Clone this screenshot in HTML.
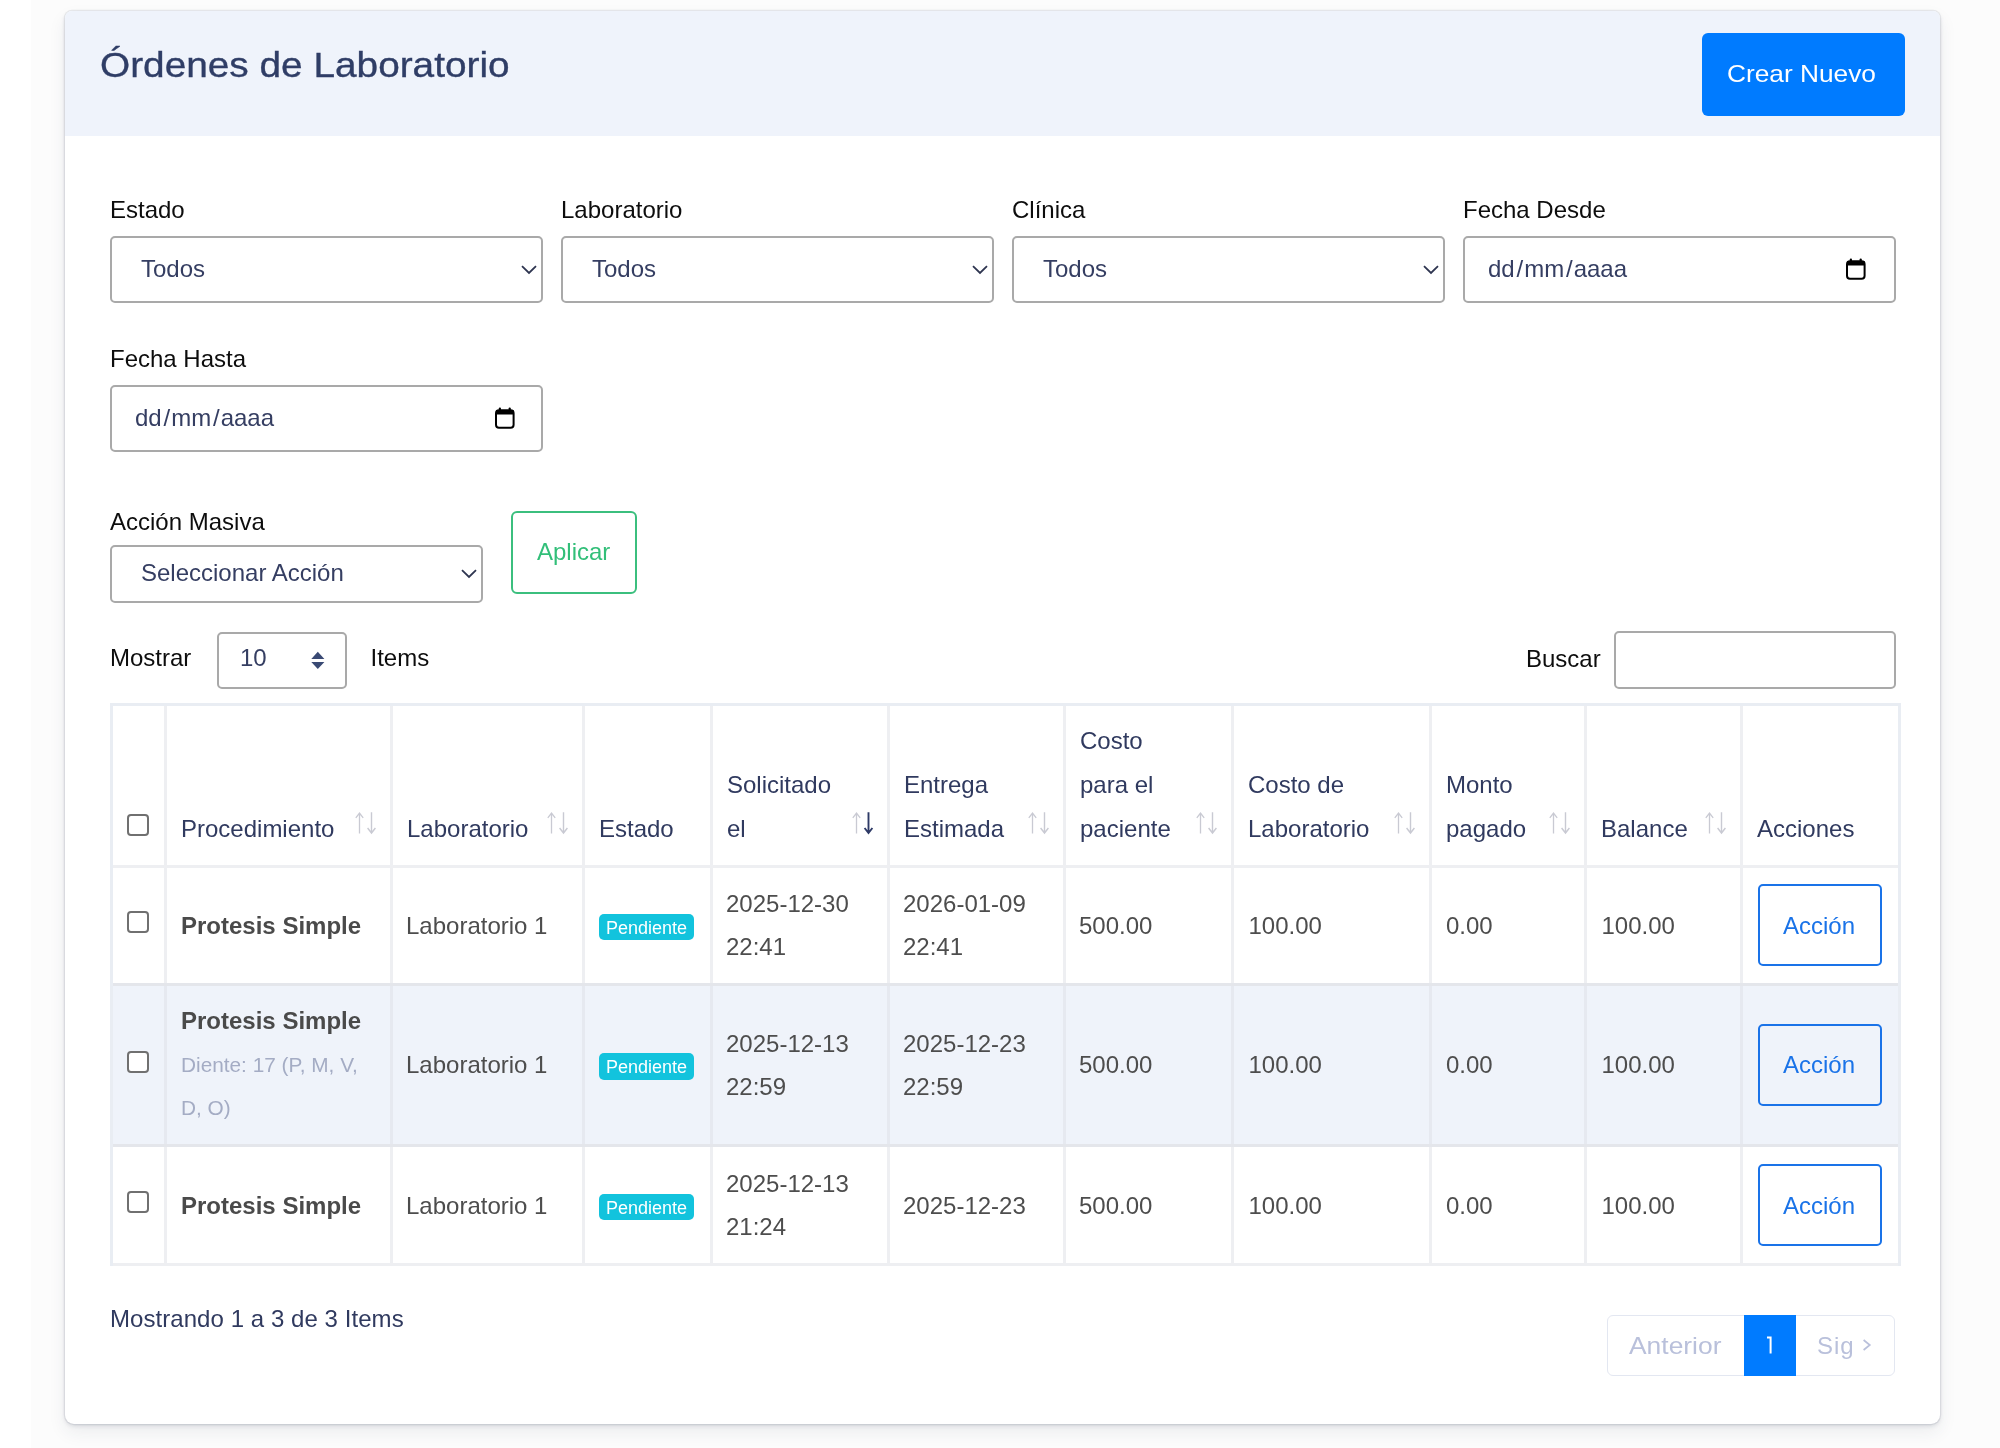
<!DOCTYPE html>
<html><head><meta charset="utf-8"><title>Ordenes de Laboratorio</title>
<style>
html,body{margin:0;padding:0;}
body{width:2000px;height:1448px;position:relative;overflow:hidden;background:#fff;font-family:"Liberation Sans", sans-serif;}
.t{position:absolute;white-space:nowrap;line-height:1;font-family:"Liberation Sans", sans-serif;}
.r{position:absolute;}
#wrap{position:absolute;left:0;top:0;width:2000px;height:1448px;will-change:transform;}
.sl{margin:0 1px 0 1.8px;}
svg.r{overflow:visible;}
</style></head><body>
<div id=wrap>
<div class="r" style="left:31px;top:0px;width:1969px;height:1448px;background:#fcfcfc;"></div>
<div class="r" style="left:65px;top:11px;width:1875px;height:1413px;background:#fff;border-radius:7px 7px 9px 9px;box-shadow:0 0 0 1.2px rgba(40,50,80,0.08),0 2px 4px rgba(40,50,80,0.13),0 8px 18px rgba(40,50,80,0.08);"></div>
<div class="r" style="left:65px;top:11px;width:1875px;height:125px;background:#eff3fb;border-radius:7px 7px 0 0;"></div>
<div class="t" style="left:99.5px;top:47.0px;font-size:35px;color:#2f3d66;font-weight:400;letter-spacing:0px;-webkit-text-stroke:0.35px #2f3d66;transform:scaleX(1.108);transform-origin:0 0;">&Oacute;rdenes de Laboratorio</div>
<div class="r" style="left:1702px;top:33px;width:203px;height:83px;background:#007bff;border-radius:6px;"></div>
<div class="t" style="left:1727.0px;top:61.7px;font-size:24px;color:#ffffff;font-weight:400;letter-spacing:0px;transform:scaleX(1.095);transform-origin:0 0;">Crear Nuevo</div>
<div class="t" style="left:110.0px;top:198.2px;font-size:24px;color:#0d0d0d;font-weight:400;letter-spacing:0px;">Estado</div>
<div class="r" style="left:110px;top:236px;width:433px;height:67px;border:2px solid #a9a9a9;border-radius:5px;box-sizing:border-box;background:#fff;"></div>
<div class="t" style="left:141.0px;top:257.2px;font-size:24px;color:#353e62;font-weight:400;letter-spacing:0px;">Todos</div>
<svg class="r" style="left:521px;top:264.5px" width="16" height="10" viewBox="0 0 16 10"><path d="M1 1.2 L8 8 L15 1.2" fill="none" stroke="#2e3550" stroke-width="1.8"/></svg>
<div class="t" style="left:561.0px;top:198.2px;font-size:24px;color:#0d0d0d;font-weight:400;letter-spacing:0px;">Laboratorio</div>
<div class="r" style="left:561px;top:236px;width:433px;height:67px;border:2px solid #a9a9a9;border-radius:5px;box-sizing:border-box;background:#fff;"></div>
<div class="t" style="left:592.0px;top:257.2px;font-size:24px;color:#353e62;font-weight:400;letter-spacing:0px;">Todos</div>
<svg class="r" style="left:972px;top:264.5px" width="16" height="10" viewBox="0 0 16 10"><path d="M1 1.2 L8 8 L15 1.2" fill="none" stroke="#2e3550" stroke-width="1.8"/></svg>
<div class="t" style="left:1012.0px;top:198.2px;font-size:24px;color:#0d0d0d;font-weight:400;letter-spacing:0px;">Cl&iacute;nica</div>
<div class="r" style="left:1012px;top:236px;width:433px;height:67px;border:2px solid #a9a9a9;border-radius:5px;box-sizing:border-box;background:#fff;"></div>
<div class="t" style="left:1043.0px;top:257.2px;font-size:24px;color:#353e62;font-weight:400;letter-spacing:0px;">Todos</div>
<svg class="r" style="left:1423px;top:264.5px" width="16" height="10" viewBox="0 0 16 10"><path d="M1 1.2 L8 8 L15 1.2" fill="none" stroke="#2e3550" stroke-width="1.8"/></svg>
<div class="t" style="left:1463.0px;top:198.2px;font-size:24px;color:#0d0d0d;font-weight:400;letter-spacing:0px;">Fecha Desde</div>
<div class="r" style="left:1463px;top:236px;width:433px;height:67px;border:2px solid #a9a9a9;border-radius:5px;box-sizing:border-box;background:#fff;"></div>
<div class="t" style="left:1488.0px;top:256.7px;font-size:24px;color:#353e62;font-weight:400;letter-spacing:0px;">dd<span class=sl>/</span>mm<span class=sl>/</span>aaaa</div>
<svg class="r" style="left:1846px;top:257.5px" width="20" height="22" viewBox="0 0 20 22"><rect x="1" y="3.2" width="17.6" height="17.6" rx="3" fill="none" stroke="#000" stroke-width="2"/><rect x="1" y="3" width="17.6" height="4.5" fill="#000"/><rect x="3.8" y="0.6" width="2.2" height="3" rx="1" fill="#000"/><rect x="13.6" y="0.6" width="2.2" height="3" rx="1" fill="#000"/></svg>
<div class="t" style="left:110.0px;top:346.7px;font-size:24px;color:#0d0d0d;font-weight:400;letter-spacing:0px;">Fecha Hasta</div>
<div class="r" style="left:110px;top:385px;width:433px;height:67px;border:2px solid #a9a9a9;border-radius:5px;box-sizing:border-box;background:#fff;"></div>
<div class="t" style="left:135.0px;top:406.2px;font-size:24px;color:#353e62;font-weight:400;letter-spacing:0px;">dd<span class=sl>/</span>mm<span class=sl>/</span>aaaa</div>
<svg class="r" style="left:494.5px;top:406.5px" width="20" height="22" viewBox="0 0 20 22"><rect x="1" y="3.2" width="17.6" height="17.6" rx="3" fill="none" stroke="#000" stroke-width="2"/><rect x="1" y="3" width="17.6" height="4.5" fill="#000"/><rect x="3.8" y="0.6" width="2.2" height="3" rx="1" fill="#000"/><rect x="13.6" y="0.6" width="2.2" height="3" rx="1" fill="#000"/></svg>
<div class="t" style="left:110.0px;top:510.2px;font-size:24px;color:#0d0d0d;font-weight:400;letter-spacing:0px;">Acci&oacute;n Masiva</div>
<div class="r" style="left:110px;top:545px;width:373px;height:58px;border:2px solid #a9a9a9;border-radius:5px;box-sizing:border-box;background:#fff;"></div>
<div class="t" style="left:141.0px;top:560.7px;font-size:24px;color:#353e62;font-weight:400;letter-spacing:0px;">Seleccionar Acci&oacute;n</div>
<svg class="r" style="left:461px;top:568.5px" width="16" height="10" viewBox="0 0 16 10"><path d="M1 1.2 L8 8 L15 1.2" fill="none" stroke="#2e3550" stroke-width="1.8"/></svg>
<div class="r" style="left:511px;top:511px;width:126px;height:83px;border:2px solid #3bbf7e;border-radius:6px;box-sizing:border-box;"></div>
<div class="t" style="left:537.0px;top:539.7px;font-size:24px;color:#32bf79;font-weight:400;letter-spacing:0px;">Aplicar</div>
<div class="t" style="left:110.0px;top:646.2px;font-size:24px;color:#0d0d0d;font-weight:400;letter-spacing:0px;">Mostrar</div>
<div class="r" style="left:217px;top:632px;width:130px;height:57px;border:2px solid #a9a9a9;border-radius:5px;box-sizing:border-box;background:#fff;"></div>
<div class="t" style="left:240.0px;top:646.2px;font-size:24px;color:#353e62;font-weight:400;letter-spacing:0px;">10</div>
<svg class="r" style="left:311px;top:651px" width="14" height="19" viewBox="0 0 14 19"><path d="M0.3 8 L6.8 0.7 L13.4 8 Z M0.3 11 L6.8 18 L13.4 11 Z" fill="#3a4a74"/></svg>
<div class="t" style="left:370.5px;top:646.2px;font-size:24px;color:#0d0d0d;font-weight:400;letter-spacing:0px;">Items</div>
<div class="t" style="left:1526.0px;top:647.2px;font-size:24px;color:#0d0d0d;font-weight:400;letter-spacing:0px;">Buscar</div>
<div class="r" style="left:1614px;top:631px;width:282px;height:58px;border:2px solid #a9a9a9;border-radius:5px;box-sizing:border-box;background:#fff;"></div>
<div class="r" style="left:110px;top:983px;width:1791px;height:164px;background:#eff3fa;"></div>
<div class="r" style="left:110px;top:703px;width:3px;height:563px;background:#eeeff2;"></div>
<div class="r" style="left:164px;top:703px;width:3px;height:563px;background:#eeeff2;"></div>
<div class="r" style="left:390px;top:703px;width:3px;height:563px;background:#eeeff2;"></div>
<div class="r" style="left:582px;top:703px;width:3px;height:563px;background:#eeeff2;"></div>
<div class="r" style="left:710px;top:703px;width:3px;height:563px;background:#eeeff2;"></div>
<div class="r" style="left:887px;top:703px;width:3px;height:563px;background:#eeeff2;"></div>
<div class="r" style="left:1063px;top:703px;width:3px;height:563px;background:#eeeff2;"></div>
<div class="r" style="left:1231px;top:703px;width:3px;height:563px;background:#eeeff2;"></div>
<div class="r" style="left:1429px;top:703px;width:3px;height:563px;background:#eeeff2;"></div>
<div class="r" style="left:1584px;top:703px;width:3px;height:563px;background:#eeeff2;"></div>
<div class="r" style="left:1740px;top:703px;width:3px;height:563px;background:#eeeff2;"></div>
<div class="r" style="left:1898px;top:703px;width:3px;height:563px;background:#eeeff2;"></div>
<div class="r" style="left:110px;top:703px;width:1791px;height:3px;background:#eeeff2;"></div>
<div class="r" style="left:110px;top:865px;width:1791px;height:3px;background:#eeeff2;"></div>
<div class="r" style="left:110px;top:983px;width:1791px;height:3px;background:#eeeff2;"></div>
<div class="r" style="left:110px;top:1144px;width:1791px;height:3px;background:#eeeff2;"></div>
<div class="r" style="left:110px;top:1263px;width:1791px;height:3px;background:#eeeff2;"></div>
<div class="r" style="left:110px;top:983px;width:1791px;height:3px;background:#e4e6eb;"></div>
<div class="r" style="left:110px;top:1144px;width:1791px;height:3px;background:#e4e6eb;"></div>
<div class="r" style="left:164px;top:986px;width:3px;height:158px;background:#e6e9f0;"></div>
<div class="r" style="left:390px;top:986px;width:3px;height:158px;background:#e6e9f0;"></div>
<div class="r" style="left:582px;top:986px;width:3px;height:158px;background:#e6e9f0;"></div>
<div class="r" style="left:710px;top:986px;width:3px;height:158px;background:#e6e9f0;"></div>
<div class="r" style="left:887px;top:986px;width:3px;height:158px;background:#e6e9f0;"></div>
<div class="r" style="left:1063px;top:986px;width:3px;height:158px;background:#e6e9f0;"></div>
<div class="r" style="left:1231px;top:986px;width:3px;height:158px;background:#e6e9f0;"></div>
<div class="r" style="left:1429px;top:986px;width:3px;height:158px;background:#e6e9f0;"></div>
<div class="r" style="left:1584px;top:986px;width:3px;height:158px;background:#e6e9f0;"></div>
<div class="r" style="left:1740px;top:986px;width:3px;height:158px;background:#e6e9f0;"></div>
<div class="r" style="left:110px;top:703px;width:1791px;height:3px;background:#e9edf3;"></div>
<div class="r" style="left:110px;top:703px;width:3px;height:563px;background:#e9edf3;"></div>
<div class="r" style="left:1898px;top:703px;width:3px;height:563px;background:#e9edf3;"></div>
<div class="r" style="left:127px;top:814px;width:22px;height:22px;border:2px solid #707070;border-radius:4px;box-sizing:border-box;background:#fff;"></div>
<div class="t" style="left:181.0px;top:816.8px;font-size:24px;color:#303a5f;font-weight:400;letter-spacing:0px;">Procedimiento</div>
<svg class="r" style="left:355px;top:811px" width="22" height="24" viewBox="0 0 22 24"><path d="M4.5 22.5 V2 M0.8 6.8 L4.5 2 L8.2 6.8" fill="none" stroke="#c9cad3" stroke-width="1.3"/><path d="M16.5 1.3 V22 M12.6 17 L16.5 22 L20.4 17" fill="none" stroke="#c9cad3" stroke-width="1.4"/></svg>
<div class="t" style="left:407.0px;top:816.8px;font-size:24px;color:#303a5f;font-weight:400;letter-spacing:0px;">Laboratorio</div>
<svg class="r" style="left:547px;top:811px" width="22" height="24" viewBox="0 0 22 24"><path d="M4.5 22.5 V2 M0.8 6.8 L4.5 2 L8.2 6.8" fill="none" stroke="#c9cad3" stroke-width="1.3"/><path d="M16.5 1.3 V22 M12.6 17 L16.5 22 L20.4 17" fill="none" stroke="#c9cad3" stroke-width="1.4"/></svg>
<div class="t" style="left:599.0px;top:816.8px;font-size:24px;color:#303a5f;font-weight:400;letter-spacing:0px;">Estado</div>
<div class="t" style="left:727.0px;top:772.8px;font-size:24px;color:#303a5f;font-weight:400;letter-spacing:0px;">Solicitado</div>
<div class="t" style="left:727.0px;top:816.8px;font-size:24px;color:#303a5f;font-weight:400;letter-spacing:0px;">el</div>
<svg class="r" style="left:852px;top:811px" width="22" height="24" viewBox="0 0 22 24"><path d="M4.5 22.5 V2 M0.8 6.8 L4.5 2 L8.2 6.8" fill="none" stroke="#c9cad3" stroke-width="1.3"/><path d="M16.5 1.3 V22 M12.6 17 L16.5 22 L20.4 17" fill="none" stroke="#2e3a66" stroke-width="1.9"/></svg>
<div class="t" style="left:904.0px;top:772.8px;font-size:24px;color:#303a5f;font-weight:400;letter-spacing:0px;">Entrega</div>
<div class="t" style="left:904.0px;top:816.8px;font-size:24px;color:#303a5f;font-weight:400;letter-spacing:0px;">Estimada</div>
<svg class="r" style="left:1028px;top:811px" width="22" height="24" viewBox="0 0 22 24"><path d="M4.5 22.5 V2 M0.8 6.8 L4.5 2 L8.2 6.8" fill="none" stroke="#c9cad3" stroke-width="1.3"/><path d="M16.5 1.3 V22 M12.6 17 L16.5 22 L20.4 17" fill="none" stroke="#c9cad3" stroke-width="1.4"/></svg>
<div class="t" style="left:1080.0px;top:728.8px;font-size:24px;color:#303a5f;font-weight:400;letter-spacing:0px;">Costo</div>
<div class="t" style="left:1080.0px;top:772.8px;font-size:24px;color:#303a5f;font-weight:400;letter-spacing:0px;">para el</div>
<div class="t" style="left:1080.0px;top:816.8px;font-size:24px;color:#303a5f;font-weight:400;letter-spacing:0px;">paciente</div>
<svg class="r" style="left:1196px;top:811px" width="22" height="24" viewBox="0 0 22 24"><path d="M4.5 22.5 V2 M0.8 6.8 L4.5 2 L8.2 6.8" fill="none" stroke="#c9cad3" stroke-width="1.3"/><path d="M16.5 1.3 V22 M12.6 17 L16.5 22 L20.4 17" fill="none" stroke="#c9cad3" stroke-width="1.4"/></svg>
<div class="t" style="left:1248.0px;top:772.8px;font-size:24px;color:#303a5f;font-weight:400;letter-spacing:0px;">Costo de</div>
<div class="t" style="left:1248.0px;top:816.8px;font-size:24px;color:#303a5f;font-weight:400;letter-spacing:0px;">Laboratorio</div>
<svg class="r" style="left:1394px;top:811px" width="22" height="24" viewBox="0 0 22 24"><path d="M4.5 22.5 V2 M0.8 6.8 L4.5 2 L8.2 6.8" fill="none" stroke="#c9cad3" stroke-width="1.3"/><path d="M16.5 1.3 V22 M12.6 17 L16.5 22 L20.4 17" fill="none" stroke="#c9cad3" stroke-width="1.4"/></svg>
<div class="t" style="left:1446.0px;top:772.8px;font-size:24px;color:#303a5f;font-weight:400;letter-spacing:0px;">Monto</div>
<div class="t" style="left:1446.0px;top:816.8px;font-size:24px;color:#303a5f;font-weight:400;letter-spacing:0px;">pagado</div>
<svg class="r" style="left:1549px;top:811px" width="22" height="24" viewBox="0 0 22 24"><path d="M4.5 22.5 V2 M0.8 6.8 L4.5 2 L8.2 6.8" fill="none" stroke="#c9cad3" stroke-width="1.3"/><path d="M16.5 1.3 V22 M12.6 17 L16.5 22 L20.4 17" fill="none" stroke="#c9cad3" stroke-width="1.4"/></svg>
<div class="t" style="left:1601.0px;top:816.8px;font-size:24px;color:#303a5f;font-weight:400;letter-spacing:0px;">Balance</div>
<svg class="r" style="left:1705px;top:811px" width="22" height="24" viewBox="0 0 22 24"><path d="M4.5 22.5 V2 M0.8 6.8 L4.5 2 L8.2 6.8" fill="none" stroke="#c9cad3" stroke-width="1.3"/><path d="M16.5 1.3 V22 M12.6 17 L16.5 22 L20.4 17" fill="none" stroke="#c9cad3" stroke-width="1.4"/></svg>
<div class="t" style="left:1757.0px;top:816.8px;font-size:24px;color:#303a5f;font-weight:400;letter-spacing:0px;">Acciones</div>
<div class="r" style="left:127px;top:911px;width:22px;height:22px;border:2px solid #707070;border-radius:4px;box-sizing:border-box;background:#fff;"></div>
<div class="t" style="left:181.0px;top:913.7px;font-size:24px;color:#4a4a4a;font-weight:700;letter-spacing:0px;">Protesis Simple</div>
<div class="t" style="left:406.0px;top:913.7px;font-size:24px;color:#4d4d4d;font-weight:400;letter-spacing:0px;">Laboratorio 1</div>
<div class="r" style="left:599px;top:913.5px;width:95px;height:26.5px;background:#12c3dd;border-radius:5px;"></div>
<div class="t" style="left:606.0px;top:918.6px;font-size:18px;color:#ffffff;font-weight:400;letter-spacing:0px;">Pendiente</div>
<div class="t" style="left:726.0px;top:892.0px;font-size:24px;color:#4d4d4d;font-weight:400;letter-spacing:0px;">2025-12-30</div>
<div class="t" style="left:726.0px;top:935.4px;font-size:24px;color:#4d4d4d;font-weight:400;letter-spacing:0px;">22:41</div>
<div class="t" style="left:903.0px;top:892.0px;font-size:24px;color:#4d4d4d;font-weight:400;letter-spacing:0px;">2026-01-09</div>
<div class="t" style="left:903.0px;top:935.4px;font-size:24px;color:#4d4d4d;font-weight:400;letter-spacing:0px;">22:41</div>
<div class="t" style="left:1079.0px;top:913.7px;font-size:24px;color:#4d4d4d;font-weight:400;letter-spacing:0px;">500.00</div>
<div class="t" style="left:1248.5px;top:913.7px;font-size:24px;color:#4d4d4d;font-weight:400;letter-spacing:0px;">100.00</div>
<div class="t" style="left:1446.0px;top:913.7px;font-size:24px;color:#4d4d4d;font-weight:400;letter-spacing:0px;">0.00</div>
<div class="t" style="left:1601.5px;top:913.7px;font-size:24px;color:#4d4d4d;font-weight:400;letter-spacing:0px;">100.00</div>
<div class="r" style="left:1758px;top:884.0px;width:124px;height:82.0px;border:2px solid #1a73e8;border-radius:5px;box-sizing:border-box;"></div>
<div class="t" style="left:1783.0px;top:913.7px;font-size:24px;color:#1a73e8;font-weight:400;letter-spacing:0px;">Acci&oacute;n</div>
<div class="r" style="left:127px;top:1051px;width:22px;height:22px;border:2px solid #707070;border-radius:4px;box-sizing:border-box;background:#fff;"></div>
<div class="t" style="left:181.0px;top:1009.2px;font-size:24px;color:#4a4a4a;font-weight:700;letter-spacing:0px;">Protesis Simple</div>
<div class="t" style="left:181.0px;top:1055.4px;font-size:20.8px;color:#a4acc4;font-weight:400;letter-spacing:0px;">Diente: 17 (P, M, V,</div>
<div class="t" style="left:181.0px;top:1098.4px;font-size:20.8px;color:#a4acc4;font-weight:400;letter-spacing:0px;">D, O)</div>
<div class="t" style="left:406.0px;top:1053.2px;font-size:24px;color:#4d4d4d;font-weight:400;letter-spacing:0px;">Laboratorio 1</div>
<div class="r" style="left:599px;top:1053.0px;width:95px;height:26.5px;background:#12c3dd;border-radius:5px;"></div>
<div class="t" style="left:606.0px;top:1058.1px;font-size:18px;color:#ffffff;font-weight:400;letter-spacing:0px;">Pendiente</div>
<div class="t" style="left:726.0px;top:1031.5px;font-size:24px;color:#4d4d4d;font-weight:400;letter-spacing:0px;">2025-12-13</div>
<div class="t" style="left:726.0px;top:1074.9px;font-size:24px;color:#4d4d4d;font-weight:400;letter-spacing:0px;">22:59</div>
<div class="t" style="left:903.0px;top:1031.5px;font-size:24px;color:#4d4d4d;font-weight:400;letter-spacing:0px;">2025-12-23</div>
<div class="t" style="left:903.0px;top:1074.9px;font-size:24px;color:#4d4d4d;font-weight:400;letter-spacing:0px;">22:59</div>
<div class="t" style="left:1079.0px;top:1053.2px;font-size:24px;color:#4d4d4d;font-weight:400;letter-spacing:0px;">500.00</div>
<div class="t" style="left:1248.5px;top:1053.2px;font-size:24px;color:#4d4d4d;font-weight:400;letter-spacing:0px;">100.00</div>
<div class="t" style="left:1446.0px;top:1053.2px;font-size:24px;color:#4d4d4d;font-weight:400;letter-spacing:0px;">0.00</div>
<div class="t" style="left:1601.5px;top:1053.2px;font-size:24px;color:#4d4d4d;font-weight:400;letter-spacing:0px;">100.00</div>
<div class="r" style="left:1758px;top:1023.5px;width:124px;height:82.0px;border:2px solid #1a73e8;border-radius:5px;box-sizing:border-box;"></div>
<div class="t" style="left:1783.0px;top:1053.2px;font-size:24px;color:#1a73e8;font-weight:400;letter-spacing:0px;">Acci&oacute;n</div>
<div class="r" style="left:127px;top:1191px;width:22px;height:22px;border:2px solid #707070;border-radius:4px;box-sizing:border-box;background:#fff;"></div>
<div class="t" style="left:181.0px;top:1193.7px;font-size:24px;color:#4a4a4a;font-weight:700;letter-spacing:0px;">Protesis Simple</div>
<div class="t" style="left:406.0px;top:1193.7px;font-size:24px;color:#4d4d4d;font-weight:400;letter-spacing:0px;">Laboratorio 1</div>
<div class="r" style="left:599px;top:1193.5px;width:95px;height:26.5px;background:#12c3dd;border-radius:5px;"></div>
<div class="t" style="left:606.0px;top:1198.6px;font-size:18px;color:#ffffff;font-weight:400;letter-spacing:0px;">Pendiente</div>
<div class="t" style="left:726.0px;top:1172.0px;font-size:24px;color:#4d4d4d;font-weight:400;letter-spacing:0px;">2025-12-13</div>
<div class="t" style="left:726.0px;top:1215.4px;font-size:24px;color:#4d4d4d;font-weight:400;letter-spacing:0px;">21:24</div>
<div class="t" style="left:903.0px;top:1193.7px;font-size:24px;color:#4d4d4d;font-weight:400;letter-spacing:0px;">2025-12-23</div>
<div class="t" style="left:1079.0px;top:1193.7px;font-size:24px;color:#4d4d4d;font-weight:400;letter-spacing:0px;">500.00</div>
<div class="t" style="left:1248.5px;top:1193.7px;font-size:24px;color:#4d4d4d;font-weight:400;letter-spacing:0px;">100.00</div>
<div class="t" style="left:1446.0px;top:1193.7px;font-size:24px;color:#4d4d4d;font-weight:400;letter-spacing:0px;">0.00</div>
<div class="t" style="left:1601.5px;top:1193.7px;font-size:24px;color:#4d4d4d;font-weight:400;letter-spacing:0px;">100.00</div>
<div class="r" style="left:1758px;top:1164.0px;width:124px;height:82.0px;border:2px solid #1a73e8;border-radius:5px;box-sizing:border-box;"></div>
<div class="t" style="left:1783.0px;top:1193.7px;font-size:24px;color:#1a73e8;font-weight:400;letter-spacing:0px;">Acci&oacute;n</div>
<div class="t" style="left:110.0px;top:1306.7px;font-size:24px;color:#303a5f;font-weight:400;letter-spacing:0.06px;">Mostrando 1 a 3 de 3 Items</div>
<div class="r" style="left:1607px;top:1315px;width:288px;height:61px;border:1.5px solid #e3e7f1;border-radius:6px;box-sizing:border-box;"></div>
<div class="r" style="left:1744px;top:1315px;width:52px;height:61px;background:#007bff;"></div>
<div class="t" style="left:1629.0px;top:1333.7px;font-size:24px;color:#b9c0db;font-weight:400;letter-spacing:0px;transform:scaleX(1.1);transform-origin:0 0;">Anterior</div>
<svg class="r" style="left:1764px;top:1335px" width="12" height="20" viewBox="0 0 12 20"><path d="M3 2.4 H6.6 V18.6" fill="none" stroke="#ffffff" stroke-width="2.0"/></svg>
<div class="t" style="left:1817.0px;top:1333.7px;font-size:24px;color:#b9c0db;font-weight:400;letter-spacing:1.0px;">Sig</div>
<svg class="r" style="left:1862px;top:1338.5px" width="10" height="13" viewBox="0 0 10 13"><path d="M1.6 1 L7.8 6 L1.6 11" fill="none" stroke="#b9c0db" stroke-width="1.7"/></svg>
</div>
</body></html>
